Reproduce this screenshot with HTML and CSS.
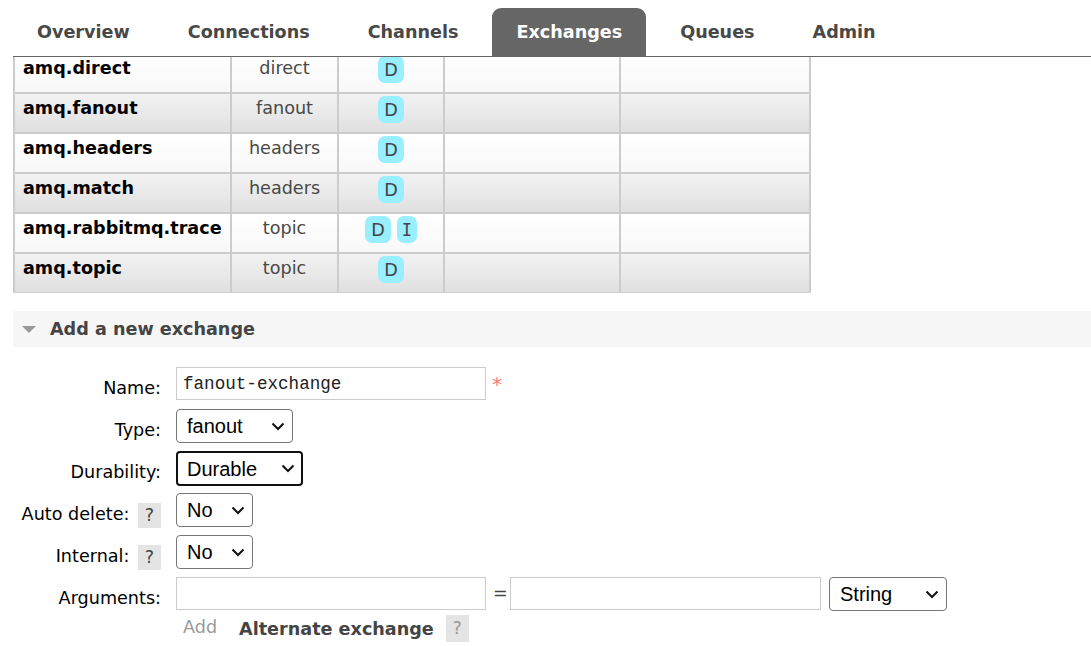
FILE: index.html
```html
<!DOCTYPE html>
<html>
<head>
<meta charset="utf-8">
<link rel="stylesheet" href="styles.css">
</head>
<body>
<nav class="tabs">
  <a class="tab">Overview</a>
  <a class="tab">Connections</a>
  <a class="tab">Channels</a>
  <a class="tab active">Exchanges</a>
  <a class="tab">Queues</a>
  <a class="tab">Admin</a>
</nav>
<main class="main">
  <div class="table-view">
    <table class="list">
      <colgroup>
        <col class="c-name"><col class="c-type"><col class="c-feat"><col class="c-in"><col class="c-out">
      </colgroup>
      <tbody>
        <tr class="alt1"><td class="name">amq.direct</td><td class="type">direct</td><td class="feat"><span class="badge">D</span></td><td></td><td></td></tr>
        <tr class="alt2"><td class="name">amq.fanout</td><td class="type">fanout</td><td class="feat"><span class="badge">D</span></td><td></td><td></td></tr>
        <tr class="alt1"><td class="name">amq.headers</td><td class="type">headers</td><td class="feat"><span class="badge">D</span></td><td></td><td></td></tr>
        <tr class="alt2"><td class="name">amq.match</td><td class="type">headers</td><td class="feat"><span class="badge">D</span></td><td></td><td></td></tr>
        <tr class="alt1"><td class="name">amq.rabbitmq.trace</td><td class="type">topic</td><td class="feat"><span class="badge">D</span><span class="badge mono">I</span></td><td></td><td></td></tr>
        <tr class="alt2"><td class="name">amq.topic</td><td class="type">topic</td><td class="feat"><span class="badge">D</span></td><td></td><td></td></tr>
      </tbody>
    </table>
  </div>

  <section class="section">
    <h2 class="section-title"><span class="tri"></span>Add a new exchange</h2>
    <div class="form">
      <label class="lbl">Name:</label>
      <div class="ctl"><input class="txt" type="text" value="fanout-exchange"><span class="req">*</span></div>

      <label class="lbl">Type:</label>
      <div class="ctl"><select class="sel w-type"><option>fanout</option></select></div>

      <label class="lbl">Durability:</label>
      <div class="ctl"><select class="sel w-dur focus"><option>Durable</option></select></div>

      <label class="lbl">Auto delete: <span class="help">?</span></label>
      <div class="ctl"><select class="sel w-no"><option>No</option></select></div>

      <label class="lbl">Internal: <span class="help">?</span></label>
      <div class="ctl"><select class="sel w-no"><option>No</option></select></div>

      <label class="lbl">Arguments:</label>
      <div class="ctl args"><input class="txt" type="text"><span class="eq">=</span><input class="txt w-val" type="text"><select class="sel w-str"><option>String</option></select></div>

      <div class="lbl"></div>
      <div class="ctl extra"><span class="add">Add</span><span class="alt">Alternate exchange</span><span class="help light">?</span></div>
    </div>
  </section>
</main>
</body>
</html>
```

FILE: styles.css
```css
html, body {
  margin: 0;
  padding: 0;
  background: #fff;
}
body {
  font-family: "DejaVu Sans", Verdana, sans-serif;
  font-size: 17.6px;
  color: #000;
  width: 1091px;
  height: 646px;
  overflow: hidden;
}

.tabs {
  display: flex;
  gap: 10px;
  margin-left: 13px;
  padding-top: 8px;
  border-bottom: 1px solid #666;
}
.tab {
  display: block;
  padding: 0 24px;
  line-height: 49px;
  height: 48px;
  font-weight: bold;
  color: #484848;
  border-radius: 9px 9px 0 0;
}
.tab.active {
  background: #666;
  color: #fff;
}

.main {
  margin-left: 13px;
}

.table-view {
  height: 236px;
  overflow: hidden;
}
.list {
  border-collapse: collapse;
  table-layout: fixed;
  width: 798px;
  margin-top: -5px;
}
.c-name { width: 217px; }
.c-type { width: 107px; }
.c-feat { width: 106px; }
.c-in { width: 176px; }
.c-out { width: 190px; }

.list td {
  border: 2px solid #ccc;
  height: 40px;
  box-sizing: border-box;
  padding: 2px 8px 0;
  vertical-align: top;
  line-height: 24px;
  white-space: nowrap;
}
.list tr.alt1 td {
  background: linear-gradient(#ffffff, #f8f8f8);
}
.list tr.alt2 td {
  background: linear-gradient(#f2f2f2, #e0e0e0);
}
.list td.name {
  font-weight: bold;
  color: #000;
}
.list td.type {
  text-align: center;
  color: #484848;
}
.list td.feat {
  text-align: center;
  padding-left: 0;
  padding-right: 0;
}
.badge {
  display: inline-block;
  background: #99eeff;
  color: #444;
  border-radius: 7px;
  height: 27px;
  line-height: 29px;
  padding: 0 6px;
  vertical-align: top;
  margin: 0 3px;
}
.badge.mono {
  font-family: "DejaVu Sans Mono", monospace;
  font-size: 17px;
  padding: 0 4px;
  width: 20px;
  box-sizing: border-box;
}

.section {
  margin-top: 18px;
}
.section-title {
  margin: 0;
  height: 36px;
  line-height: 36px;
  background: #f6f6f6;
  font-size: 17.6px;
  font-weight: bold;
  color: #444;
  display: flex;
  align-items: center;
}
.tri {
  display: block;
  width: 0;
  height: 0;
  border-left: 7.5px solid transparent;
  border-right: 7.5px solid transparent;
  border-top: 7px solid #999;
  margin-left: 9px;
  margin-right: 14px;
  margin-top: 1px;
}

.form {
  display: grid;
  grid-template-columns: 148px 1fr;
  grid-auto-rows: 34px;
  column-gap: 15px;
  row-gap: 8px;
  margin-top: 20px;
}
.lbl {
  text-align: right;
  line-height: 24px;
  padding-top: 9px;
  white-space: nowrap;
  color: #000;
}
.ctl {
  display: flex;
  align-items: flex-start;
}
.txt {
  width: 310px;
  height: 33px;
  box-sizing: border-box;
  border: 1px solid #ccc;
  padding: 0 6px;
  font-family: "Liberation Mono", "Courier New", monospace;
  font-size: 17.6px;
  color: #222;
  margin: 0;
  outline: none;
}
.w-val { width: 311px; }
.req {
  color: #ff7777;
  font-size: 20px;
  margin-left: 6px;
  line-height: 24px;
  margin-top: 5px;
}
.sel {
  -webkit-appearance: none;
  appearance: none;
  font-family: "Liberation Sans", Arial, sans-serif;
  font-size: 20px;
  height: 34px;
  box-sizing: border-box;
  border: 1px solid #767676;
  border-radius: 4px;
  background-color: #fff;
  background-image: url("data:image/svg+xml;utf8,<svg xmlns='http://www.w3.org/2000/svg' width='14' height='9' viewBox='0 0 14 9'><path d='M1.5 1.5 L7 7 L12.5 1.5' fill='none' stroke='%23111' stroke-width='2'/></svg>");
  background-repeat: no-repeat;
  background-position: right 7px center;
  color: #000;
  padding: 0 4px 0 10px;
  margin: 0;
}
.w-type { width: 117px; }
.w-dur { width: 127px; height: 35px; }
.w-no { width: 77px; }
.w-str { width: 118px; margin-left: 1px; }
.sel.focus {
  border: 2px solid #111;
  padding-left: 9px;
  background-position: right 6px center;
}
.args {
  gap: 7px;
}
.eq {
  color: #444;
  line-height: 33px;
  width: 11px;
  text-align: center;
  margin-right: -1px;
}
.help {
  display: inline-block;
  width: 23px;
  height: 25px;
  line-height: 25px;
  text-align: center;
  background: #e4e4e4;
  color: #444;
  margin-left: 3px;
  vertical-align: -1px;
}
.help.light {
  color: #999;
  height: 27px;
  line-height: 27px;
  margin-left: 12px;
}
.extra {
  align-items: center;
  margin-top: -4px;
  height: 27px;
}
.add {
  color: #999;
  margin-left: 7px;
  margin-right: 22px;
  margin-top: -4px;
}
.alt {
  font-weight: bold;
  color: #444;
}
```
